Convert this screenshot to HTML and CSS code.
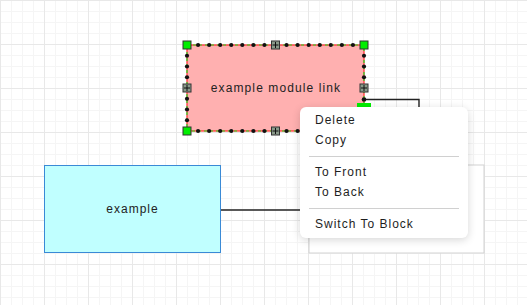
FILE: index.html
```html
<!DOCTYPE html>
<html lang="en">
<head>
    <meta charset="UTF-8">
    <meta name="viewport" content="width=device-width, initial-scale=1.0">
    <title>Diagram editor</title>
    <link rel="stylesheet" href="styles.css">
</head>
<body>
    <div class="canvas">
        <svg class="links" width="527" height="305">
            <rect x="309" y="165" width="175" height="88" fill="#fff" stroke="#d2d2d2" stroke-width="1"/>
            <path d="M221 210 H310" stroke="#222" stroke-width="1.4" fill="none"/>
            <path d="M364 99.5 H419 V120" stroke="#222" stroke-width="1.4" fill="none"/>
        </svg>

        <div class="node module" style="left:187px;top:45px;width:177px;height:86px">
            <span>example module link</span>
        </div>
        <div class="node block" style="left:44px;top:165px;width:177px;height:88px">
            <span>example</span>
        </div>

        <svg class="handles" width="527" height="305" id="handles">
            <rect x="187" y="45" width="177" height="86" fill="none" stroke="#ff2a2a" stroke-width="1.2"/>
            <rect x="187" y="45" width="177" height="86" fill="none" stroke="#22dd22" stroke-width="1.2" stroke-dasharray="3 3"/>
            <rect x="357" y="103" width="14" height="6" fill="#00ee00"/>
            <circle cx="364" cy="99.5" r="2.3" fill="#111"/>
        </svg>

        <div class="menu">
            <div class="item">Delete</div>
            <div class="item">Copy</div>
            <div class="sep"></div>
            <div class="item">To Front</div>
            <div class="item">To Back</div>
            <div class="sep"></div>
            <div class="item">Switch To Block</div>
        </div>
    </div>

    <script>
        // selection handles around the module node
        const svg = document.getElementById('handles');
        const ns = 'http://www.w3.org/2000/svg';
        const box = { x: 187, y: 45, w: 177, h: 86 };

        function dot(x, y) {
            const c = document.createElementNS(ns, 'circle');
            c.setAttribute('cx', x);
            c.setAttribute('cy', y);
            c.setAttribute('r', 2.1);
            c.setAttribute('fill', '#111');
            svg.appendChild(c);
        }

        function square(x, y, fill, cross) {
            const r = document.createElementNS(ns, 'rect');
            r.setAttribute('x', x - 4);
            r.setAttribute('y', y - 4);
            r.setAttribute('width', 8);
            r.setAttribute('height', 8);
            r.setAttribute('fill', fill);
            r.setAttribute('stroke', '#333');
            r.setAttribute('stroke-width', 1);
            svg.appendChild(r);
            if (cross) {
                const p = document.createElementNS(ns, 'path');
                p.setAttribute('d', `M${x - 3} ${y} H${x + 3} M${x} ${y - 3} V${y + 3}`);
                p.setAttribute('stroke', '#111');
                p.setAttribute('stroke-width', 1);
                svg.appendChild(p);
            }
        }

        for (let i = 1; i < 16; i++) {
            if (i === 8) continue;
            const x = box.x + box.w * i / 16;
            dot(x, box.y);
            dot(x, box.y + box.h);
        }
        for (let i = 1; i < 8; i++) {
            if (i === 4) continue;
            const y = box.y + box.h * i / 8;
            dot(box.x, y);
            if (y < 95) dot(box.x + box.w, y);
        }

        square(box.x + box.w / 2, box.y, '#8a9a8a', true);
        square(box.x + box.w / 2, box.y + box.h, '#8a9a8a', true);
        square(box.x, box.y + box.h / 2, '#8a9a8a', true);
        square(box.x + box.w, box.y + box.h / 2, '#8a9a8a', true);

        square(box.x, box.y, '#00ee00');
        square(box.x + box.w, box.y, '#00ee00');
        square(box.x, box.y + box.h, '#00ee00');
        square(box.x + box.w, box.y + box.h, '#00ee00');
    </script>
</body>
</html>
```

FILE: styles.css
```css
body {
    margin: 0;
    font-family: 'Liberation Sans', Arial, sans-serif;
}
.canvas {
    position: relative;
    width: 527px;
    height: 305px;
    overflow: hidden;
    background-color: #fff;
    background-image:
        linear-gradient(to right, #e8e8e8 1px, transparent 1px),
        linear-gradient(to bottom, #e8e8e8 1px, transparent 1px),
        linear-gradient(to right, #f5f5f5 1px, transparent 1px),
        linear-gradient(to bottom, #f5f5f5 1px, transparent 1px);
    background-size: 44px 44px, 44px 44px, 11px 11px, 11px 11px;
}
.links, .handles {
    position: absolute;
    left: 0;
    top: 0;
}
.node {
    position: absolute;
    box-sizing: border-box;
    display: flex;
    align-items: center;
    justify-content: center;
    font-size: 12px;
    letter-spacing: 1px;
    color: #222;
}
.node.module {
    background-color: #ffb0b0;
    letter-spacing: 1.1px;
    padding-left: 1px;
}
.node.block {
    background-color: #c0ffff;
    border: 1px solid #3a8ad6;
}
.menu {
    position: absolute;
    left: 300px;
    top: 107px;
    width: 168px;
    box-sizing: border-box;
    padding: 3px 0 4px;
    background-color: #fff;
    border-radius: 6px;
    box-shadow: 0 2px 8px rgba(0, 0, 0, 0.16);
    font-size: 12px;
    letter-spacing: 1px;
    color: #1e1e1e;
}
.item {
    line-height: 20px;
    padding-left: 15px;
}
.sep {
    height: 1px;
    margin: 6px 9px 5px;
    background-color: #d0d0d0;
}
```
